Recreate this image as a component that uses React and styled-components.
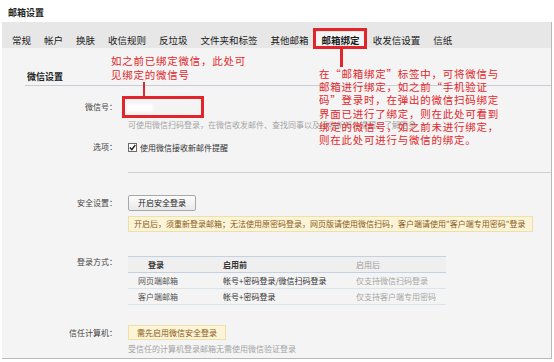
import React from "react";
import styled, { createGlobalStyle } from "styled-components";

const GlobalStyle = createGlobalStyle`
  html, body { margin: 0; padding: 0; background: #fff; }
  body { font-family: "Noto Sans CJK SC", "Liberation Sans", sans-serif; }
  * { box-sizing: border-box; }
`;

const Page = styled.div`
  position: relative;
  width: 554px;
  height: 362px;
  overflow: hidden;
  background: #fff;
`;

const Header = styled.div`
  height: 22px;
  padding: 4px 0 0 8px;
  font-size: 9px;
  font-weight: 700;
  line-height: 18px;
  color: #222;
`;

const Panel = styled.div`
  margin: 0 2px;
  width: 550px;
  border-right: 1px solid #b9b9b9;
  border-bottom: 1px solid #b9b9b9;
`;

const TabBar = styled.div`
  display: flex;
  height: 26px;
  padding: 10px 0 0 3.5px;
  background: #e7e7e7;
`;

const Tab = styled.div`
  padding: 0 6.5px;
  height: 16px;
  line-height: 16px;
  font-size: 9.5px;
  color: #1a1a1a;
  white-space: nowrap;
  font-weight: ${(p) => (p.$active ? 700 : 400)};
  background: ${(p) => (p.$active ? "#f4f4f4" : "transparent")};
`;

const Content = styled.div`
  height: 310px;
  background: #f4f4f4;
  padding-top: 23px;
  overflow: hidden;
  font-size: 8px;
  color: #333;
`;

const SectionHeader = styled.div`
  margin-left: 23px;
  padding: 0 0 2px 2px;
  font-size: 9px;
  font-weight: 700;
  line-height: 12px;
  color: #222;
  border-bottom: 1px solid #c8ced8;
`;

const FormRow = styled.div`
  display: grid;
  grid-template-columns: 115px 1fr;
  column-gap: 11px;
  margin-top: ${(p) => p.$mt}px;
  align-items: start;
`;

const Label = styled.div`
  text-align: right;
  font-size: 8px;
  color: #444;
  line-height: ${(p) => p.$lh}px;
  white-space: nowrap;
`;

const Value = styled.div`
  display: flex;
  align-items: center;
  min-height: ${(p) => p.$h || 0}px;
`;

const BlurredId = styled.div`
  margin-left: -1px;
  width: 26px;
  height: 7px;
  background: #fff;
  filter: blur(1px);
`;

const Indented = styled.div`
  margin-left: 126px;
  margin-top: ${(p) => p.$mt}px;
`;

const Hint = styled.div`
  font-size: 8px;
  line-height: ${(p) => p.$lh || 14}px;
  color: #a4a4a4;
  white-space: nowrap;
`;

const CheckRow = styled.label`
  display: flex;
  align-items: center;
  gap: 3px;
  color: #333;
  font-size: 8px;
  white-space: nowrap;
`;

const CheckBox = styled.span`
  display: inline-flex;
  align-items: center;
  justify-content: center;
  width: 9px;
  height: 9px;
  border: 1px solid #6b6b6b;
  background: #fff;
`;

const Separator = styled.div`
  margin: 17px 0 0 126px;
  border-top: 1px solid #cdd2d8;
`;

const Button = styled.button`
  height: 16px;
  padding: 0 9px;
  font-family: inherit;
  font-size: 8px;
  line-height: 14px;
  color: #222;
  background: linear-gradient(#fcfcfc, #e9e9e9);
  border: 1px solid #a8a8a8;
  border-radius: 2px;
  white-space: nowrap;
`;

const Notice = styled.div`
  display: inline-block;
  height: ${(p) => p.$h}px;
  padding: 0 ${(p) => p.$pr}px 0 ${(p) => p.$pl}px;
  line-height: ${(p) => p.$h - 2}px;
  font-size: 8px;
  color: #8a5a16;
  background: #fcf4d6;
  border: 1px solid #f0dfa8;
  white-space: nowrap;
`;

const Table = styled.table`
  width: 318px;
  border-collapse: collapse;
  font-size: 8px;
  border-top: 1px solid #c3d1e2;
`;

const Th = styled.th`
  height: 16px;
  padding: 0 0 0 ${(p) => p.$pl || 10}px;
  text-align: left;
  font-weight: ${(p) => (p.$muted ? 400 : 700)};
  color: ${(p) => (p.$muted ? "#9c9c9c" : "#333")};
  background: #efefef;
  border-bottom: 1px solid #c3d1e2;
  white-space: nowrap;
`;

const Td = styled.td`
  height: 16px;
  padding: 0 0 0 10px;
  color: ${(p) => p.$color || "#333"};
  border-bottom: 1px solid #dde3ea;
  white-space: nowrap;
`;

const RedBox = styled.div`
  position: absolute;
  border: 3px solid #e1262b;
`;

const RedLine = styled.div`
  position: absolute;
  background: #e1262b;
`;

const Note = styled.div`
  position: absolute;
  font-size: 10.5px;
  letter-spacing: 0.75px;
  color: #e3282c;
  white-space: pre;
`;

const tabs = ["常规", "帐户", "换肤", "收信规则", "反垃圾", "文件夹和标签", "其他邮箱", "邮箱绑定", "收发信设置", "信纸"];

export default function App() {
  return (
    <Page>
      <GlobalStyle />
      <Header>邮箱设置</Header>
      <Panel>
        <TabBar>
          {tabs.map((t) => (
            <Tab key={t} $active={t === "邮箱绑定"}>{t}</Tab>
          ))}
        </TabBar>
        <Content>
          <SectionHeader>微信设置</SectionHeader>

          <FormRow $mt={13}>
            <Label $lh={16}>微信号：</Label>
            <Value $h={16}><BlurredId /></Value>
          </FormRow>
          <Indented $mt={3}>
            <Hint>可使用微信扫码登录，在微信收发邮件、查找同事以及接收新邮件提醒。了解更多</Hint>
          </Indented>

          <FormRow $mt={7}>
            <Label $lh={16}>选项：</Label>
            <Value $h={16}>
              <CheckRow>
                <CheckBox>
                  <svg width="7" height="7" viewBox="0 0 7 7">
                    <path d="M0.8 3.6 L2.8 5.6 L6.3 1" fill="none" stroke="#222" strokeWidth="1.4" />
                  </svg>
                </CheckBox>
                使用微信接收新邮件提醒
              </CheckRow>
            </Value>
          </FormRow>

          <Separator />

          <FormRow $mt={22}>
            <Label $lh={16}>安全设置：</Label>
            <Value $h={16}><Button>开启安全登录</Button></Value>
          </FormRow>
          <Indented $mt={5}>
            <Notice $h={16} $pl={5} $pr={6}>
              开启后，须重新登录邮箱；无法使用原密码登录，网页版请使用微信扫码，客户端请使用"客户端专用密码"登录
            </Notice>
          </Indented>

          <FormRow $mt={24}>
            <Label $lh={12}>登录方式：</Label>
            <Table>
              <colgroup>
                <col style={{ width: 85 }} />
                <col style={{ width: 133 }} />
                <col style={{ width: 100 }} />
              </colgroup>
              <thead>
                <tr>
                  <Th $pl={20}>登录</Th>
                  <Th>启用前</Th>
                  <Th $muted>启用后</Th>
                </tr>
              </thead>
              <tbody>
                <tr>
                  <Td $color="#555">网页端邮箱</Td>
                  <Td>帐号+密码登录/微信扫码登录</Td>
                  <Td $color="#a8a8a8">仅支持微信扫码登录</Td>
                </tr>
                <tr>
                  <Td $color="#555">客户端邮箱</Td>
                  <Td>帐号+密码登录</Td>
                  <Td $color="#a8a8a8">仅支持客户端专用密码</Td>
                </tr>
              </tbody>
            </Table>
          </FormRow>

          <FormRow $mt={20}>
            <Label $lh={15}>信任计算机：</Label>
            <Value $h={15}>
              <Notice $h={15} $pl={8} $pr={8}>需先启用微信安全登录</Notice>
            </Value>
          </FormRow>
          <Indented $mt={3}>
            <Hint $lh={12}>受信任的计算机登录邮箱无需使用微信验证登录</Hint>
          </Indented>
        </Content>
      </Panel>

      <RedBox style={{ left: 313, top: 28, width: 54, height: 21 }} />
      <RedLine style={{ left: 340, top: 49, width: 3, height: 18 }} />
      <RedBox style={{ left: 122, top: 96, width: 82, height: 22 }} />
      <RedLine style={{ left: 143, top: 82, width: 2, height: 14 }} />

      <Note style={{ left: 111, top: 54, lineHeight: "14px" }}>
        {"如之前已绑定微信，此处可\n见绑定的微信号"}
      </Note>
      <Note style={{ left: 319, top: 67, lineHeight: "13.2px" }}>
        {"在“邮箱绑定”标签中，可将微信与\n邮箱进行绑定，如之前“手机验证\n码”登录时，在弹出的微信扫码绑定\n界面已进行了绑定，则在此处可看到\n绑定的微信号，如之前未进行绑定，\n则在此处可进行与微信的绑定。"}
      </Note>
    </Page>
  );
}
